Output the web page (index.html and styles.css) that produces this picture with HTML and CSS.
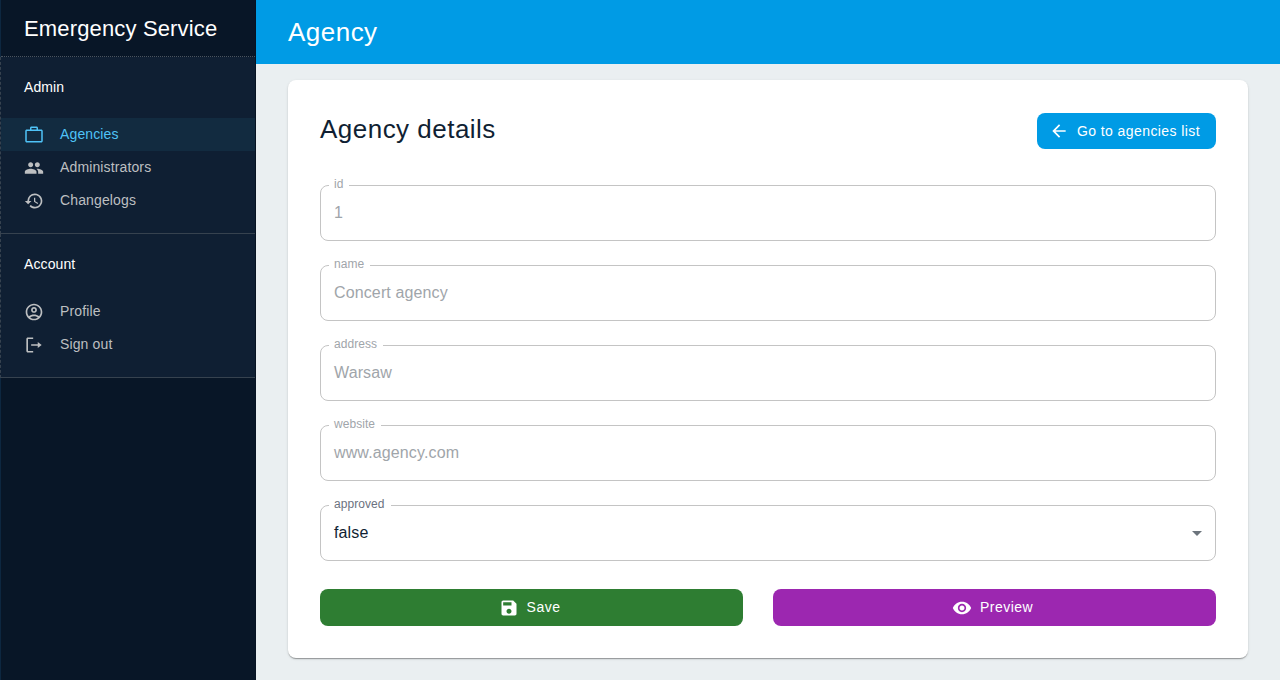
FILE: index.html
```html
<!DOCTYPE html>
<html lang="en">
<head>
<meta charset="utf-8">
<title>Agency</title>
<link rel="stylesheet" href="styles.css">
</head>
<body>
<div class="app">
  <aside class="sidebar">
    <div class="brand">Emergency Service</div>
    <nav class="section">
      <h2 class="section-title">Admin</h2>
      <a class="item active"><svg class="icon" viewBox="0 0 24 24"><path d="M15 5.500V3.700H9v1.800h6zM3.300 7.300v12h17.400v-12H3.300zm17.400-1.800c1 0 1.800.8 1.800 1.800v12c0 1-.8 1.800-1.800 1.800H3.300c-1 0-1.800-.8-1.800-1.800v-12c0-1 .8-1.800 1.800-1.800h3.900V3.700c0-1 .8-1.800 1.800-1.800h6c1 0 1.800.8 1.800 1.800v1.800h3.900z"/></svg><span>Agencies</span></a>
      <a class="item"><svg class="icon" viewBox="0 0 24 24"><path d="M16 11c1.660 0 2.990-1.340 2.990-3S17.660 5 16 5s-3 1.340-3 3 1.340 3 3 3zm-8 0c1.660 0 2.990-1.340 2.990-3S9.660 5 8 5 5 6.340 5 8s1.340 3 3 3zm0 2c-2.330 0-7 1.170-7 3.500V19h14v-2.500c0-2.330-4.670-3.500-7-3.500zm8 0c-.29 0-.62.02-.97.05 1.160.84 1.970 1.970 1.970 3.450V19h6v-2.500c0-2.330-4.670-3.500-7-3.500z"/></svg><span>Administrators</span></a>
      <a class="item"><svg class="icon" viewBox="0 0 24 24"><path d="M13 3a9 9 0 0 0-9 9H1l3.890 3.890.07.14L9 12H6a7 7 0 1 1 2.060 4.940l-1.420 1.420A9 9 0 1 0 13 3zm-1 5v5l4.280 2.540.72-1.210-3.500-2.080V8H12z"/></svg><span>Changelogs</span></a>
    </nav>
    <nav class="section">
      <h2 class="section-title">Account</h2>
      <a class="item"><svg class="icon" viewBox="0 0 24 24"><path d="M12 2C6.480 2 2 6.480 2 12s4.480 10 10 10 10-4.480 10-10S17.520 2 12 2zM7.350 18.500C8.660 17.560 10.260 17 12 17s3.340.56 4.650 1.500C15.340 19.440 13.740 20 12 20s-3.340-.56-4.650-1.500zm10.790-1.380C16.450 15.800 14.320 15 12 15s-4.450.8-6.140 2.120C4.700 15.730 4 13.950 4 12c0-4.420 3.580-8 8-8s8 3.580 8 8c0 1.950-.7 3.730-1.860 5.120z"/><path d="M12 6c-1.930 0-3.500 1.570-3.500 3.500S10.070 13 12 13s3.500-1.570 3.500-3.500S13.930 6 12 6zm0 5c-.83 0-1.500-.67-1.500-1.500S11.170 8 12 8s1.500.67 1.500 1.500S12.830 11 12 11z"/></svg><span>Profile</span></a>
      <a class="item"><svg class="icon" viewBox="0 0 24 24"><path d="M4.800 4.800h6.200V3H4.600C3.600 3 2.800 3.800 2.800 4.800v14.400c0 1 .8 1.800 1.800 1.800H11v-1.800H4.800zM16.500 8.300v2.800H8.600v1.800h7.900v2.800L21.200 12z"/></svg><span>Sign out</span></a>
    </nav>
  </aside>
  <div class="page">
    <header class="topbar"><h1 class="heading">Agency</h1></header>
    <main class="content">
      <section class="card">
        <div class="card-head">
          <h2 class="heading">Agency details</h2>
          <button class="btn btn-back"><svg class="icon" viewBox="0 0 24 24"><path d="M20 11H7.830l5.590-5.590L12 4l-8 8 8 8 1.410-1.410L7.830 13H20v-2z"/></svg><span>Go to agencies list</span></button>
        </div>
        <div class="fields">
          <fieldset class="field disabled"><legend>id</legend><div class="value">1</div></fieldset>
          <fieldset class="field disabled"><legend>name</legend><div class="value">Concert agency</div></fieldset>
          <fieldset class="field disabled"><legend>address</legend><div class="value">Warsaw</div></fieldset>
          <fieldset class="field disabled"><legend>website</legend><div class="value">www.agency.com</div></fieldset>
          <fieldset class="field"><legend>approved</legend><div class="value"><span>false</span><svg class="caret" viewBox="0 0 24 24"><path d="M7 10l5 5 5-5z"/></svg></div></fieldset>
        </div>
        <div class="actions">
          <button class="btn btn-save"><svg class="icon" viewBox="0 0 24 24"><path d="M17 3H5c-1.110 0-2 .9-2 2v14c0 1.100.89 2 2 2h14c1.100 0 2-.9 2-2V7l-4-4zm-5 16c-1.660 0-3-1.340-3-3s1.340-3 3-3 3 1.340 3 3-1.340 3-3 3zm3-10H5V5h10v4z"/></svg><span>Save</span></button>
          <button class="btn btn-preview"><svg class="icon" viewBox="0 0 24 24"><path d="M12 4.500C7 4.500 2.730 7.610 1 12c1.730 4.390 6 7.500 11 7.500s9.270-3.110 11-7.500c-1.730-4.390-6-7.500-11-7.500zM12 17c-2.760 0-5-2.240-5-5s2.240-5 5-5 5 2.240 5 5-2.240 5-5 5zm0-8c-1.660 0-3 1.340-3 3s1.340 3 3 3 3-1.340 3-3-1.340-3-3-3z"/></svg><span>Preview</span></button>
        </div>
      </section>
    </main>
  </div>
</div>
</body>
</html>
```
FILE: styles.css
```css
* { box-sizing: border-box; }
body {
  margin: 0;
  font-family: "Liberation Sans", Helvetica, Arial, sans-serif;
  color: #101f33;
  background: #eaeff1;
}
h1, h2 { margin: 0; font-weight: 400; }
.app { display: flex; height: 680px; overflow: hidden; }

.sidebar {
  width: 256px;
  flex: none;
  background: #081627;
  border-left: 1px solid #0d2740;
  border-right: 1px solid #071322;
}
.brand {
  height: 57px;
  padding: 0 23px;
  font-size: 22px;
  line-height: 57px;
  letter-spacing: 0.15px;
  color: #fff;
  border-bottom: 1px dotted #4a5460;
}
.section {
  margin-left: -1px;
  background: #0f1f33;
  padding-bottom: 16px;
  border-left: 1px dashed #36424f;
  border-bottom: 1px solid #36424f;
}
.section-title {
  height: 61px;
  padding: 0 23px;
  font-size: 14px;
  line-height: 60px;
  letter-spacing: 0.1px;
  color: #fff;
}
.item {
  display: flex;
  align-items: center;
  gap: 16px;
  height: 33px;
  padding: 0 23px;
  font-size: 14px;
  letter-spacing: 0.13px;
  color: #bdbfc1;
}
.item span { line-height: 33px; }
.item.active { color: #4fc3f7; background: #122b40; }
.icon { width: 20px; height: 20px; flex: none; fill: currentColor; }

.page { flex: 1; display: flex; flex-direction: column; }
.topbar {
  height: 64px;
  padding: 0 32px;
  display: flex;
  align-items: center;
  background: #009be5;
  color: #fff;
}
.heading { font-size: 26px; line-height: 32px; letter-spacing: 0.48px; }
.content { padding: 16px 32px; }
.card {
  height: 578px;
  padding: 33px 32px 32px;
  border-radius: 8px;
  background: #fff;
  box-shadow: 0 2px 1px -1px rgba(0, 0, 0, 0.2), 0 1px 1px rgba(0, 0, 0, 0.14), 0 1px 3px rgba(0, 0, 0, 0.12);
}
.card-head { display: flex; justify-content: space-between; height: 67px; }
.btn {
  display: flex;
  align-items: center;
  justify-content: center;
  gap: 8px;
  height: 37px;
  border: 0;
  border-radius: 8px;
  padding: 0 20px 0 16px;
  font: 14px "Liberation Sans", Helvetica, Arial, sans-serif;
  letter-spacing: 0.48px;
  white-space: nowrap;
  color: #fff;
}
.btn span { padding-bottom: 1px; }
.btn-back {
  width: 179px;
  height: 36px;
  padding: 0 0 0 12px;
  justify-content: flex-start;
  letter-spacing: 0.41px;
  background: #009be5;
}

.fields { display: flex; flex-direction: column; gap: 19px; }
.field {
  height: 61px;
  min-width: 0;
  margin: 0;
  padding: 0 8px;
  border: 1px solid #c4c4c4;
  border-radius: 8px;
}
.field legend {
  height: 11px;
  padding: 0 6px 0 5px;
  font-size: 12px;
  line-height: 8px;
  letter-spacing: 0.06px;
  color: #6b7280;
}
.value {
  display: flex;
  justify-content: space-between;
  align-items: center;
  height: 44px;
  padding: 0 5px;
  font-size: 16px;
  line-height: 24px;
  letter-spacing: 0.13px;
}
.disabled legend, .disabled .value { color: #9fa5aa; }
.caret { width: 24px; height: 24px; margin-right: -7px; fill: #6c747c; }

.actions { display: grid; grid-template-columns: 423px 443px; gap: 30px; margin-top: 28px; }
.btn-save { background: #2e7d32; }
.btn-preview { background: #9c27b0; }
```
